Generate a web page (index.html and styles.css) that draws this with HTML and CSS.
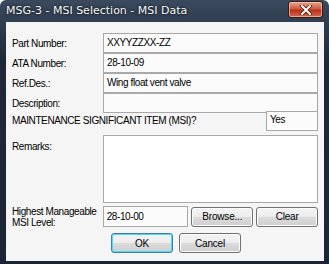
FILE: index.html
```html
<!DOCTYPE html>
<html lang="en">
<head>
    <meta charset="UTF-8">
    <title>MSG-3 - MSI Selection - MSI Data</title>
    <link rel="stylesheet" href="styles.css">
</head>
<body>
    <div class="window">
        <div class="title-bar">
            <span class="title">MSG-3 - MSI Selection - MSI Data</span>
            <div class="close-btn">
                <svg width="14" height="10" viewBox="0 0 14 10">
                    <path d="M3 1 L11 9 M11 1 L3 9" stroke="#3a1a14" stroke-width="3.4" stroke-linecap="square"/>
                    <path d="M3 1 L11 9 M11 1 L3 9" stroke="#fff" stroke-width="2" stroke-linecap="square"/>
                </svg>
            </div>
        </div>

        <div class="client">
            <div class="fields">
                <label>Part Number:</label>
                <div class="box">XXYYZZXX-ZZ</div>
                <label>ATA Number:</label>
                <div class="box">28-10-09</div>
                <label>Ref.Des.:</label>
                <div class="box">Wing float vent valve</div>
                <label>Description:</label>
                <div class="box"></div>
            </div>

            <div class="msi-row">
                <label>MAINTENANCE SIGNIFICANT ITEM (MSI)?</label>
                <div class="box yes-box">Yes</div>
            </div>

            <div class="remarks-row">
                <label>Remarks:</label>
                <div class="box remarks-box"></div>
            </div>

            <div class="level-row">
                <label>Highest Manageable<br>MSI Level:</label>
                <div class="box level-box">28-10-00</div>
                <button class="btn">Browse...</button>
                <button class="btn">Clear</button>
            </div>

            <div class="actions">
                <button class="btn btn-default">OK</button>
                <button class="btn">Cancel</button>
            </div>
        </div>
    </div>
</body>
</html>
```

FILE: styles.css
```css
body {
    margin: 0;
    padding: 0;
    background-color: #ffffff;
    font-family: "Liberation Sans", Arial, sans-serif;
    font-size: 10px;
    letter-spacing: -0.4px;
    color: #000;
}

/* Window frame */
.window {
    width: 329px;
    height: 264px;
    box-sizing: border-box;
    background: linear-gradient(#3b4a5e, #1e2838 60px, #1c2534);
    border-radius: 6px 6px 0 0;
    padding: 0 5px 3px 6px;
    display: flex;
    flex-direction: column;
}

.title-bar {
    height: 22px;
    flex-shrink: 0;
    display: flex;
    align-items: flex-start;
    justify-content: space-between;
}

.title {
    color: #f4f6f8;
    font-family: "DejaVu Sans", sans-serif;
    font-size: 11px;
    letter-spacing: 0;
    margin-top: 4px;
    text-shadow: 0 0 3px #000;
}

.close-btn {
    width: 33px;
    height: 15px;
    margin-top: 1px;
    margin-right: 1px;
    border: 1px solid #3a1a14;
    border-radius: 3px;
    background: linear-gradient(#e9a593, #cf5a3f 45%, #b8321a 55%, #d3684c);
    display: flex;
    align-items: center;
    justify-content: center;
    box-shadow: inset 0 0 0 1px rgba(255, 210, 190, 0.6);
}

/* Dialog body */
.client {
    flex: 1;
    min-height: 0;
    background-color: #f5f5f5;
    padding: 11px 6px 0 6px;
    display: flex;
    flex-direction: column;
}

label {
    line-height: 12px;
    white-space: nowrap;
}

.box {
    box-sizing: border-box;
    height: 20px;
    background-color: #fbfbfb;
    border: 1px solid #a8a8a8;
    padding: 2px 2px 0 3px;
    line-height: 14px;
    white-space: nowrap;
    overflow: hidden;
}

.fields {
    display: grid;
    grid-template-columns: 91px 1fr;
    grid-auto-rows: 20px;
    align-items: center;
}

.fields label {
    padding-top: 1px;
}

.msi-row {
    display: flex;
    align-items: center;
    justify-content: space-between;
    height: 20px;
    margin-top: -2px;
}

.yes-box {
    width: 52px;
    padding-top: 1px;
}

.remarks-row {
    display: grid;
    grid-template-columns: 91px 1fr;
    margin-top: 4px;
}

.remarks-row label {
    padding-top: 6px;
}

.remarks-box {
    height: 68px;
    background-color: #ffffff;
}

.level-row {
    display: flex;
    align-items: center;
    height: 21px;
    margin-top: 3px;
    gap: 3px;
}

.level-row label {
    width: 88px;
    line-height: 11px;
    padding-top: 1px;
}

.level-box {
    width: 86px;
    height: 21px;
    padding-top: 3px;
}

.btn {
    box-sizing: border-box;
    width: 62px;
    height: 20px;
    font-family: "Liberation Sans", Arial, sans-serif;
    font-size: 10px;
    letter-spacing: -0.2px;
    color: #000;
    border: 1px solid #707070;
    border-radius: 3px;
    background: linear-gradient(#f4f4f4, #ececec 50%, #dcdcdc 50%, #cfcfcf);
    padding: 0;
    box-shadow: inset 0 0 0 1px #fcfcfc;
}

.actions {
    display: flex;
    gap: 6px;
    margin-top: 6px;
    padding-left: 99px;
}

.btn-default {
    border-color: #3c7fb1;
    box-shadow: inset 0 0 0 1px #48d8fb;
}
```
